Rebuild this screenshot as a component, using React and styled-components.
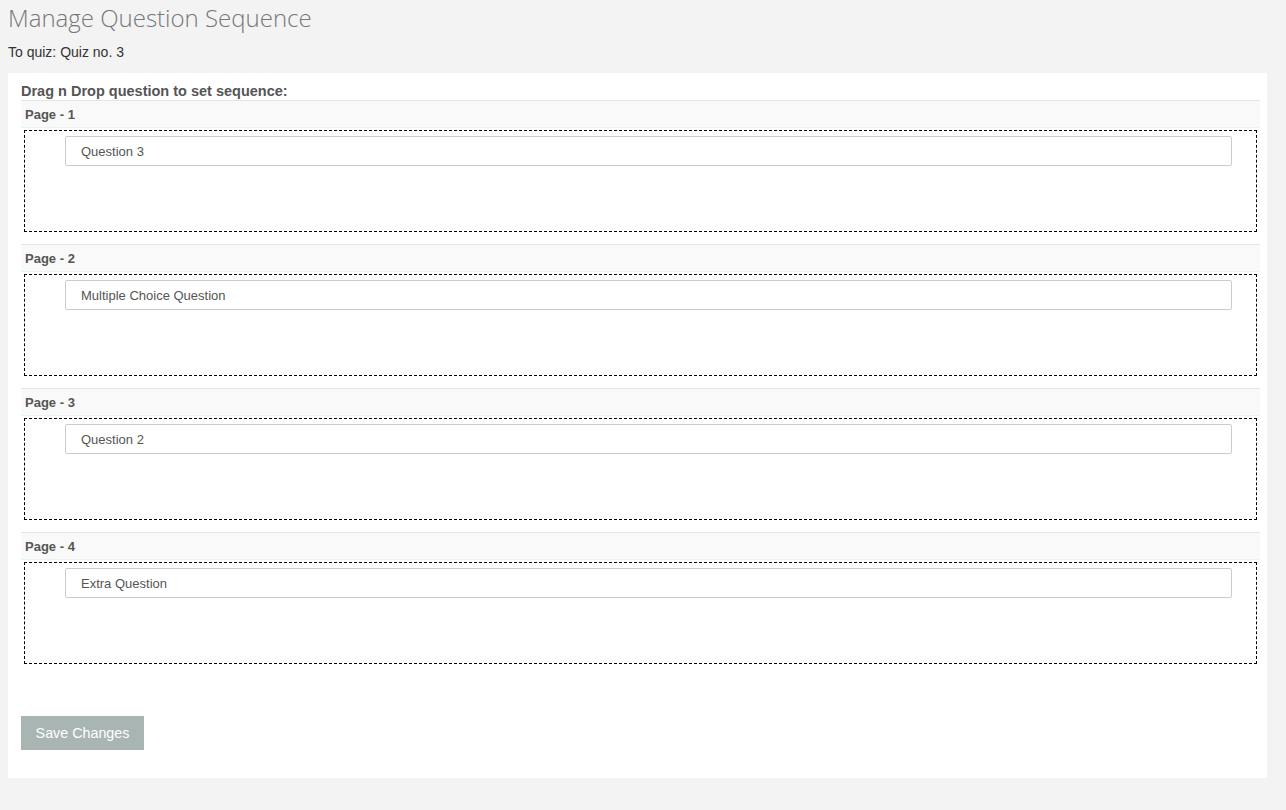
import styled, { createGlobalStyle } from "styled-components";

const GlobalStyle = createGlobalStyle`
  body {
    margin: 0;
    background: #f3f3f3;
    font-family: "Liberation Sans", Arial, sans-serif;
    font-size: 13px;
    color: #333;
  }
`;

const pages = [
  { id: 1, questions: ["Question 3"] },
  { id: 2, questions: ["Multiple Choice Question"] },
  { id: 3, questions: ["Question 2"] },
  { id: 4, questions: ["Extra Question"] },
];

function App() {
  return (
    <Wrapper>
      <GlobalStyle />
      <Title>Manage Question Sequence</Title>
      <SubTitle>To quiz: Quiz no. 3</SubTitle>
      <Panel>
        <Instruction>Drag n Drop question to set sequence:</Instruction>
        {pages.map((page) => (
          <Section key={page.id}>
            <PageHeader>Page - {page.id}</PageHeader>
            <DropZone>
              {page.questions.map((q) => (
                <QuestionItem key={q}>{q}</QuestionItem>
              ))}
            </DropZone>
          </Section>
        ))}
        <SaveButton type="button">Save Changes</SaveButton>
      </Panel>
    </Wrapper>
  );
}
export default App;

const Wrapper = styled.div`
  padding: 0 19px 32px 8px;
`;

const Title = styled.h1`
  margin: 0;
  padding-top: 3px;
  font-family: "Open Sans", sans-serif;
  font-weight: 300;
  font-size: 24px;
  line-height: 30px;
  color: #777;
`;

const SubTitle = styled.div`
  margin-top: 11px;
  font-size: 14px;
  line-height: 16px;
  color: #333;
`;

const Panel = styled.div`
  margin-top: 13px;
  background: #fff;
  padding: 9px 7px 28px 13px;
`;

const Instruction = styled.div`
  font-weight: bold;
  font-size: 14.5px;
  line-height: 18px;
  color: #555;
`;

const Section = styled.div`
  margin-bottom: 12px;
`;

const PageHeader = styled.div`
  height: 26px;
  display: flex;
  align-items: center;
  padding-left: 4px;
  background: #f9f9f9;
  border-top: 1px solid #e4e4e4;
  border-bottom: 1px solid #f0f0f0;
  font-weight: bold;
  font-size: 13px;
  color: #555;
`;

const DropZone = styled.div`
  margin: 2px 3px 0;
  border: 1px dashed #000;
  padding: 5px 24px 0 40px;
  height: 95px;
`;

const QuestionItem = styled.div`
  height: 28px;
  display: flex;
  align-items: center;
  padding-left: 15px;
  border: 1px solid #ccc;
  border-radius: 2px;
  background: #fff;
  font-size: 13px;
  color: #555;
`;

const SaveButton = styled.button`
  margin-top: 40px;
  width: 123px;
  height: 34px;
  border: none;
  background: #a9b5b3;
  color: #fff;
  font-family: "Liberation Sans", Arial, sans-serif;
  font-size: 14.3px;
  padding: 0;
`;
